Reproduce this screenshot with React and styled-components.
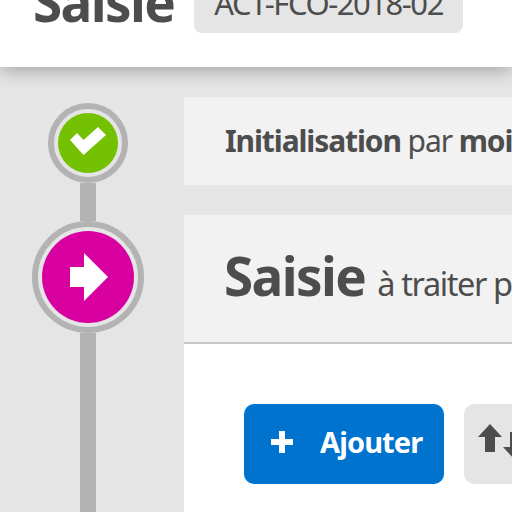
import React from "react";
import styled, { createGlobalStyle } from "styled-components";

const Global = createGlobalStyle`
  html, body { margin: 0; padding: 0; width: 512px; height: 512px; overflow: hidden; background: #e5e5e5; }
  #root { width: 512px; height: 512px; }
`;
const Page = styled.div`
  width: 512px; height: 512px; overflow: hidden; display: flex; flex-direction: column;
  font-family: "Noto Sans", "Open Sans", sans-serif; color: #4d4d4d; background: #e5e5e5;
`;
const Header = styled.header`
  flex: none; height: 67px; background: #fff; box-shadow: 0 0 20px rgba(0,0,0,.4);
  position: relative; z-index: 1; display: flex; align-items: flex-end; gap: 20px;
  padding: 0 0 34px 33px; box-sizing: border-box;
`;
const HeaderTitle = styled.h1`
  margin: 0 0 5px; font-size: 53px; line-height: 53px; font-weight: 700; letter-spacing: -1.6px; white-space: nowrap;
`;
const Code = styled.span`
  background: #e5e5e5; border-radius: 8px; font-size: 31px; line-height: 40px;
  padding: 0 20px 10px; white-space: nowrap; letter-spacing: -1.45px; font-weight: 400;
`;
const Body = styled.div`flex: 1; min-height: 0; display: flex;`;
const Rail = styled.aside`
  flex: none; width: 184px; display: flex; flex-direction: column; align-items: center;
  padding: 36px 8px 0 0; box-sizing: border-box;
`;
const Step = styled.div`
  flex: none; box-sizing: border-box; width: ${p => p.$size}px; height: ${p => p.$size}px; border-radius: 50%;
  border: 6px solid #b3b3b3; padding: 4px; background: #e5e5e5;
`;
const Disc = styled.div`
  width: 100%; height: 100%; border-radius: 50%; background: ${p => p.$color};
  display: flex; align-items: center; justify-content: center;
`;
const Connector = styled.div`
  flex: ${p => (p.$fill ? "1" : "none")}; width: 16px; height: ${p => p.$h || 0}px; background: #b3b3b3;
`;
const CheckIcon = styled.svg`margin-bottom: 4px;`;
const ArrowIcon = styled.svg`margin-left: 2px;`;
const Main = styled.main`flex: 1; min-width: 0; display: flex; flex-direction: column; padding-top: 30px;`;
const DoneCard = styled.section`
  flex: none; height: 88px; box-sizing: border-box; background: #f2f2f2; display: flex; align-items: center; padding: 0 0 2px 41px;
  font-size: 30px; white-space: nowrap; letter-spacing: -1.1px; margin-bottom: 30px;
`;
const Strong = styled.strong`font-weight: 700;`;
const ActiveCard = styled.section`
  flex: none; height: 129px; box-sizing: border-box; background: #f2f2f2; border-bottom: 2px solid #c8c8c8;
  display: flex; align-items: baseline; padding: 29px 0 0 40px; white-space: nowrap; gap: 12px;
`;
const ActiveTitle = styled.h2`margin: 0; font-size: 53px; font-weight: 700; letter-spacing: -1.6px; line-height: 64px;`;
const ActiveMeta = styled.span`font-size: 32.5px; letter-spacing: -1.4px;`;
const Panel = styled.div`flex: 1; background: #fff; display: flex; gap: 20px; padding: 60px 0 0 60px;`;
const Primary = styled.button`
  flex: none; width: 200px; height: 80px; border: 0; border-radius: 10px; background: #0073cf; color: #fff;
  font: 700 29px/76px "Noto Sans", sans-serif; letter-spacing: -0.9px; display: flex; align-items: flex-start; padding: 0 0 0 27px; gap: 27px;
`;
const PlusIcon = styled.svg`margin-top: 27px;`;
const Secondary = styled.button`
  flex: none; width: 90px; height: 80px; border: 0; border-radius: 10px; background: #e5e5e5; padding: 20px 0 0 14px;
  display: flex; align-items: flex-start;
`;

export default function App() {
  return (
    <Page>
      <Global />
      <Header>
        <HeaderTitle>Saisie</HeaderTitle>
        <Code>ACT-FCO-2018-02</Code>
      </Header>
      <Body>
        <Rail>
          <Step $size={80}>
            <Disc $color="#73c100">
              <CheckIcon width="36" height="28" viewBox="0 0 36 28"><path d="M0 13 L7 6 L13.5 13 L28 0 L36 8 L13.5 28 Z" fill="#fff" /></CheckIcon>
            </Disc>
          </Step>
          <Connector $h={38} />
          <Step $size={112}>
            <Disc $color="#d900a0">
              <ArrowIcon width="38" height="48" viewBox="0 0 38 48"><path d="M0 14 H14 V0 L38 24 L14 48 V34 H0 Z" fill="#fff" /></ArrowIcon>
            </Disc>
          </Step>
          <Connector $fill />
        </Rail>
        <Main>
          <DoneCard><Strong>Initialisation</Strong>&nbsp;par&nbsp;<Strong>moi-même</Strong></DoneCard>
          <ActiveCard>
            <ActiveTitle>Saisie</ActiveTitle>
            <ActiveMeta>à traiter par moi-même</ActiveMeta>
          </ActiveCard>
          <Panel>
            <Primary>
              <PlusIcon width="22" height="22" viewBox="0 0 22 22"><path d="M8 0 H14 V8 H22 V14 H14 V22 H8 V14 H0 V8 H8 Z" fill="#fff" /></PlusIcon>
              Ajouter
            </Primary>
            <Secondary>
              <svg width="50" height="40" viewBox="0 0 50 40">
                <path d="M12 0 L24 13 H17 V28 H7 V13 H0 Z" fill="#4d4d4d" />
                <path d="M32 8 H42 V23 H49 L37 36 L25 23 H32 Z" fill="#4d4d4d" />
              </svg>
            </Secondary>
          </Panel>
        </Main>
      </Body>
    </Page>
  );
}
